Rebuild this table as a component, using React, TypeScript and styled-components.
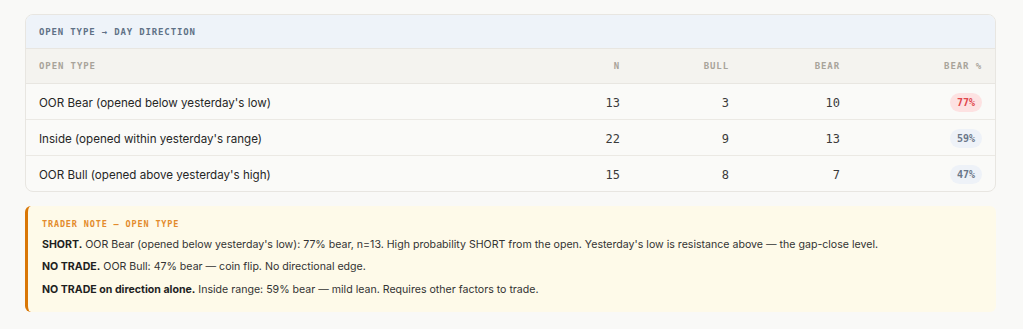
import React from "react";
import styled, { createGlobalStyle } from "styled-components";

const Global = createGlobalStyle`
  html, body { margin: 0; padding: 0; background: #f9f9f7; }
  body { font-family: "Inter", "Noto Sans", sans-serif; color: #2b2b2b; }
`;

const MONO = `"DejaVu Sans Mono", "Liberation Mono", monospace`;

const Page = styled.div`
  padding: 14px 27px 18px 25px;
  display: flex;
  flex-direction: column;
  gap: 14px;
`;

const Card = styled.div`
  background: #fafaf8;
  border: 1px solid #e8e6e1;
  border-radius: 8px;
  overflow: hidden;
`;

const CardTitle = styled.div`
  background: #eef3f9;
  height: 33px;
  display: flex;
  align-items: center;
  padding: 0 13px;
  font-family: ${MONO};
  font-size: 9px;
  font-weight: 700;
  letter-spacing: 0.85px;
  color: #5f7186;
  border-bottom: 1px solid #e8e6e1;
`;

const Table = styled.table`
  width: 100%;
  border-collapse: collapse;
  table-layout: fixed;
`;

const Col = styled.col<{ $w?: number }>`
  width: ${(p) => (p.$w ? `${p.$w}px` : "auto")};
`;

const Th = styled.th<{ $align?: string }>`
  background: #f4f3ef;
  height: 34px;
  padding: 0 13px;
  text-align: ${(p) => p.$align || "right"};
  font-family: ${MONO};
  font-size: 9px;
  font-weight: 700;
  letter-spacing: 0.9px;
  color: #a8a39a;
  border-bottom: 1px solid #e8e6e1;
`;

const Tr = styled.tr`
  & + & td { border-top: 1px solid #ebe9e4; }
`;

const Td = styled.td<{ $align?: string }>`
  height: 33px;
  padding: 0 13px 2px;
  text-align: ${(p) => p.$align || "right"};
`;

const Label = styled.span`
  font-size: 11.6px;
  color: #262626;
`;

const Num = styled.span`
  font-family: ${MONO};
  font-size: 12px;
  color: #3a3a3a;
`;

const Badge = styled.span<{ $tone: "red" | "blue" }>`
  display: inline-block;
  padding: 3px 7px;
  border-radius: 10px;
  font-family: ${MONO};
  font-size: 10px;
  font-weight: 700;
  line-height: 13px;
  background: ${(p) => (p.$tone === "red" ? "#fde2e2" : "#eef2f8")};
  color: ${(p) => (p.$tone === "red" ? "#e0474c" : "#6b7789")};
`;

const Note = styled.div`
  background: #fefae9;
  border-left: 3px solid #d97706;
  border-radius: 6px;
  padding: 13px 14px 14px 14px;
  display: flex;
  flex-direction: column;
  gap: 6.5px;
`;

const NoteTitle = styled.div`
  font-family: ${MONO};
  font-size: 8.5px;
  font-weight: 700;
  letter-spacing: 0.85px;
  color: #e38b2c;
  margin-bottom: 1px;
`;

const NoteLine = styled.div`
  font-size: 10.6px;
  line-height: 16px;
  color: #333;
  b { font-weight: 700; color: #1f1f1f; }
`;

const rows = [
  { label: "OOR Bear (opened below yesterday's low)", n: 13, bull: 3, bear: 10, pct: "77%", tone: "red" as const },
  { label: "Inside (opened within yesterday's range)", n: 22, bull: 9, bear: 13, pct: "59%", tone: "blue" as const },
  { label: "OOR Bull (opened above yesterday's high)", n: 15, bull: 8, bear: 7, pct: "47%", tone: "blue" as const },
];

export default function App() {
  return (
    <>
      <Global />
      <Page>
        <Card>
          <CardTitle>OPEN TYPE → DAY DIRECTION</CardTitle>
          <Table>
            <colgroup>
              <Col />
              <Col $w={110} />
              <Col $w={109} />
              <Col $w={111} />
              <Col $w={142} />
            </colgroup>
            <thead>
              <tr>
                <Th $align="left">OPEN TYPE</Th>
                <Th>N</Th>
                <Th>BULL</Th>
                <Th>BEAR</Th>
                <Th>BEAR %</Th>
              </tr>
            </thead>
            <tbody>
              {rows.map((r) => (
                <Tr key={r.label}>
                  <Td $align="left"><Label>{r.label}</Label></Td>
                  <Td><Num>{r.n}</Num></Td>
                  <Td><Num>{r.bull}</Num></Td>
                  <Td><Num>{r.bear}</Num></Td>
                  <Td><Badge $tone={r.tone}>{r.pct}</Badge></Td>
                </Tr>
              ))}
            </tbody>
          </Table>
        </Card>
        <Note>
          <NoteTitle>TRADER NOTE — OPEN TYPE</NoteTitle>
          <NoteLine>
            <b>SHORT.</b> OOR Bear (opened below yesterday's low): 77% bear, n=13. High probability SHORT from the open. Yesterday's low is resistance above — the gap-close level.
          </NoteLine>
          <NoteLine>
            <b>NO TRADE.</b> OOR Bull: 47% bear — coin flip. No directional edge.
          </NoteLine>
          <NoteLine>
            <b>NO TRADE on direction alone.</b> Inside range: 59% bear — mild lean. Requires other factors to trade.
          </NoteLine>
        </Note>
      </Page>
    </>
  );
}
